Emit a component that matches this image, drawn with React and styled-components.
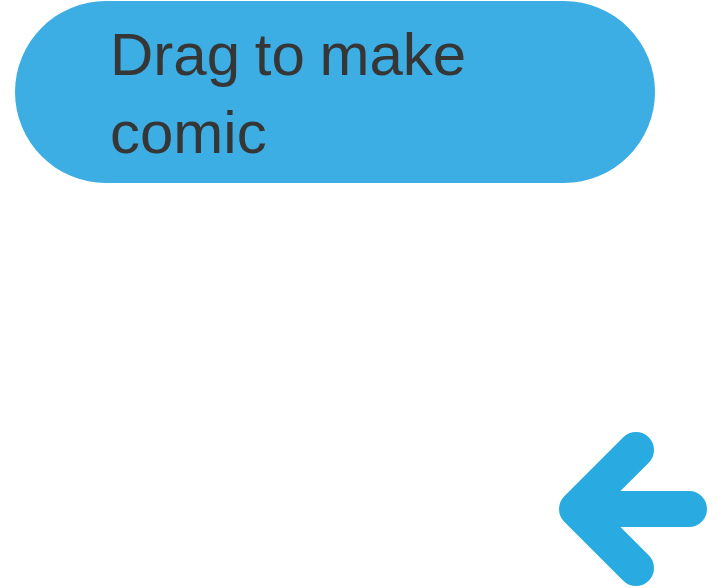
import React from 'react';
import styled, { createGlobalStyle } from 'styled-components';

const GlobalStyle = createGlobalStyle`
  html, body {
    margin: 0;
    padding: 0;
    background: #ffffff;
  }
`;

const Screen = styled.div`
  width: 718px;
  height: 588px;
  display: flex;
  flex-direction: column;
  box-sizing: border-box;
  padding: 1px 10px 1px 15px;
  overflow: hidden;
`;

// Blue speech-bubble style hint
const Hint = styled.div`
  width: 640px;
  height: 182px;
  box-sizing: border-box;
  padding: 15px 0 0 95px;
  background: #3daee3;
  border-radius: 91px;
`;

const HintText = styled.p`
  margin: 0;
  width: 420px;
  font-family: "Liberation Sans", Arial, sans-serif;
  font-size: 60px;
  line-height: 78px;
  word-spacing: -2px;
  color: #363636;
`;

const ArrowIcon = styled.svg`
  display: block;
  margin-top: auto;
  align-self: flex-end;
`;

const BackArrow = () => (
  <ArrowIcon width="150" height="156" viewBox="0 0 150 156">
    <path
      d="M78 19 L19 78 L78 137 M19 78 L131 78"
      fill="none"
      stroke="#29abe2"
      strokeWidth="36"
      strokeLinecap="round"
      strokeLinejoin="round"
    />
  </ArrowIcon>
);

export default function App() {
  return (
    <>
      <GlobalStyle />
      <Screen>
        <Hint>
          <HintText>Drag to make comic</HintText>
        </Hint>
        <BackArrow />
      </Screen>
    </>
  );
}
